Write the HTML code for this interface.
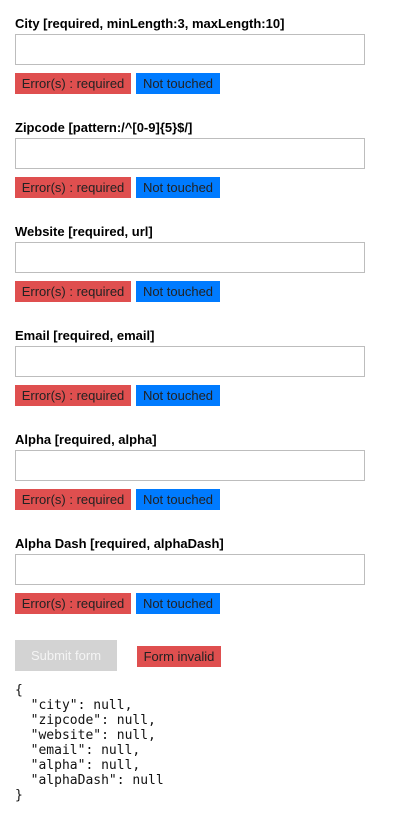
<!DOCTYPE html>
<html><head><style>
body{margin:0;background:#fff;font-family:"Liberation Sans",sans-serif;color:#000;}
.sec{position:absolute;left:15px;width:350px;height:104px;}
.lab{position:absolute;top:16px;left:0;font-size:13px;font-weight:bold;white-space:nowrap;}
.inp{position:absolute;top:34px;left:0;width:348px;height:29px;border:1px solid #bdbdbd;background:#fff;}
.b{position:absolute;top:73px;height:21px;line-height:21px;font-size:13px;color:#222;text-align:center;}
.r{left:0;width:116px;background:#df4f4f;}
.bl{left:121px;width:84px;background:#007bff;}
pre{position:absolute;left:15px;top:683px;margin:0;font-family:"DejaVu Sans Mono",monospace;font-size:13px;line-height:15px;color:#111;}
</style></head><body>
<div class="sec" style="top:0"><div class="lab">City [required, minLength:3, maxLength:10]</div><div class="inp"></div><div class="b r">Error(s) : required</div><div class="b bl">Not touched</div></div>
<div class="sec" style="top:104px"><div class="lab">Zipcode [pattern:/^[0-9]{5}$/]</div><div class="inp"></div><div class="b r">Error(s) : required</div><div class="b bl">Not touched</div></div>
<div class="sec" style="top:208px"><div class="lab">Website [required, url]</div><div class="inp"></div><div class="b r">Error(s) : required</div><div class="b bl">Not touched</div></div>
<div class="sec" style="top:312px"><div class="lab">Email [required, email]</div><div class="inp"></div><div class="b r">Error(s) : required</div><div class="b bl">Not touched</div></div>
<div class="sec" style="top:416px"><div class="lab">Alpha [required, alpha]</div><div class="inp"></div><div class="b r">Error(s) : required</div><div class="b bl">Not touched</div></div>
<div class="sec" style="top:520px"><div class="lab">Alpha Dash [required, alphaDash]</div><div class="inp"></div><div class="b r">Error(s) : required</div><div class="b bl">Not touched</div></div>
<div style="position:absolute;left:15px;top:640px;width:102px;height:31px;background:#d3d3d3;color:#f4f4f4;font-size:13px;line-height:31px;text-align:center;">Submit form</div>
<div style="position:absolute;left:137px;top:646px;width:84px;height:21px;background:#df4f4f;color:#222;font-size:13px;line-height:21px;text-align:center;">Form invalid</div>
<pre>{
  "city": null,
  "zipcode": null,
  "website": null,
  "email": null,
  "alpha": null,
  "alphaDash": null
}</pre>
</body></html>
